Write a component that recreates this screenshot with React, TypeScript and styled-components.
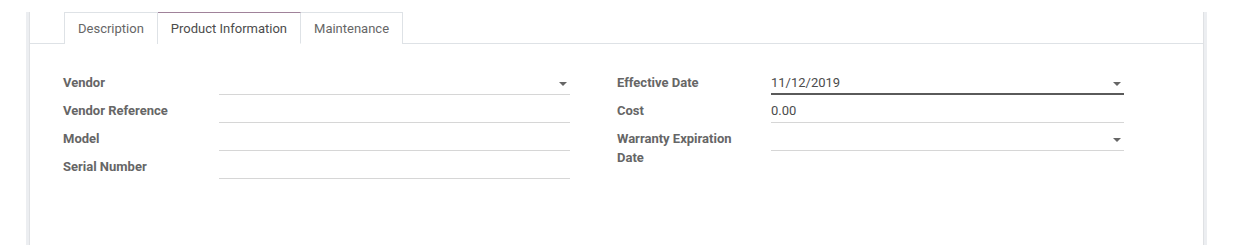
import React from 'react';
import styled, { createGlobalStyle } from 'styled-components';

const GlobalStyle = createGlobalStyle`
  html, body {
    margin: 0;
    padding: 0;
    background: #ffffff;
  }
  body {
    font-family: Roboto, "Noto Sans", "Liberation Sans", sans-serif;
    font-size: 13px;
    color: #4c4c4c;
  }
`;

const Page = styled.div`
  padding-left: 29px;
  height: 245px;
  overflow: hidden;
`;

const Sheet = styled.div`
  box-sizing: border-box;
  width: 1175px;
  height: 245px;
  background: #fff;
  border: 1px solid #dfe1e4;
  border-top: none;
  box-shadow: -3px 0 0 #eceef1, 3px 0 0 #eceef1;
`;

const TabNav = styled.div`
  display: flex;
  margin-top: 12px;
  padding-left: 34px;
  border-bottom: 1px solid #dee2e6;
`;

const Tab = styled.div<{ $active?: boolean }>`
  box-sizing: border-box;
  height: 32px;
  line-height: 31px;
  padding: 0 13px;
  margin-bottom: -1px;
  background: #fff;
  border: 1px solid #dee2e6;
  border-bottom: ${({ $active }) => ($active ? '1px solid #fff' : 'none')};
  border-top-color: ${({ $active }) => ($active ? '#a0829a' : '#dee2e6')};
  color: ${({ $active }) => ($active ? '#4c4c4c' : '#666')};
  position: relative;
  z-index: ${({ $active }) => ($active ? 1 : 0)};
  white-space: nowrap;

  & + & {
    border-left: none;
  }
`;

const Groups = styled.div`
  display: grid;
  grid-template-columns: 507px 507px;
  column-gap: 47px;
  padding: 27px 0 0 33px;
`;

const Group = styled.div`
  display: flex;
  flex-direction: column;
`;

const Row = styled.div<{ $labelWidth: number }>`
  display: grid;
  grid-template-columns: ${({ $labelWidth }) => $labelWidth}px 1fr;
  align-items: start;
  margin-bottom: 4px;
`;

const Label = styled.div`
  box-sizing: border-box;
  padding: 2px 16px 0 0;
  line-height: 19px;
  font-weight: 700;
  color: #666;
`;

const Field = styled.div<{ $focused?: boolean }>`
  box-sizing: border-box;
  position: relative;
  height: 24px;
  line-height: 23px;
  border-bottom: ${({ $focused }) => ($focused ? '2px solid #5a5a5a' : '1px solid #d6d6d6')};
  color: #4c4c4c;
`;

const Caret = styled.span`
  position: absolute;
  right: 3px;
  top: 11px;
  width: 0;
  height: 0;
  border-left: 4px solid transparent;
  border-right: 4px solid transparent;
  border-top: 4px solid #666;
`;

type FieldDef = {
  label: string;
  value?: string;
  select?: boolean;
  focused?: boolean;
};

const left: FieldDef[] = [
  { label: 'Vendor', select: true },
  { label: 'Vendor Reference' },
  { label: 'Model' },
  { label: 'Serial Number' },
];

const right: FieldDef[] = [
  { label: 'Effective Date', value: '11/12/2019', select: true, focused: true },
  { label: 'Cost', value: '0.00' },
  { label: 'Warranty Expiration Date', select: true },
];

const FieldGroup = ({ fields, labelWidth }: { fields: FieldDef[]; labelWidth: number }) => (
  <Group>
    {fields.map((f) => (
      <Row key={f.label} $labelWidth={labelWidth}>
        <Label>{f.label}</Label>
        <Field $focused={f.focused}>
          {f.value}
          {f.select && <Caret />}
        </Field>
      </Row>
    ))}
  </Group>
);

const App = () => {
  const tabs = ['Description', 'Product Information', 'Maintenance'];
  return (
    <>
      <GlobalStyle />
      <Page>
        <Sheet>
          <TabNav>
            {tabs.map((t) => (
              <Tab key={t} $active={t === 'Product Information'}>
                {t}
              </Tab>
            ))}
          </TabNav>
          <Groups>
            <FieldGroup fields={left} labelWidth={156} />
            <FieldGroup fields={right} labelWidth={154} />
          </Groups>
        </Sheet>
      </Page>
    </>
  );
};

export default App;
